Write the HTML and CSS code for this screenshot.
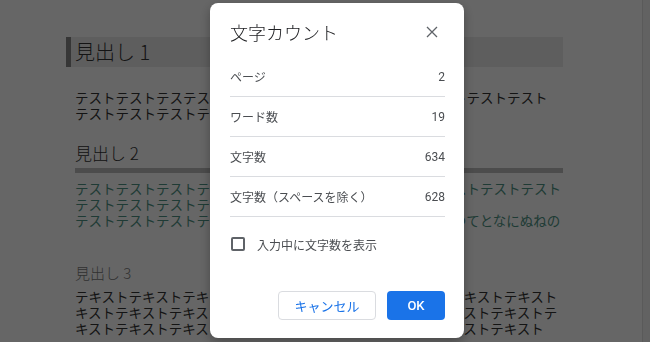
FILE: index.html
```html
<html lang="ja"><head>
  <meta charset="UTF-8">
  <meta name="viewport" content="width=device-width, initial-scale=1.0">
  <title>文字カウント</title>
  <link rel="stylesheet" href="styles.css">
</head>
<body>
  <div class="doc">
    <div class="page">
      <h1 class="heading1">見出し 1</h1>
      <p class="para">テストテストテステストテストテストテストテストテストテストテストテスト<br>テストテストテストテスおわりテストテスト</p>
      <h2 class="heading2">見出し 2</h2>
      <p class="para green">テストテストテストテストテストテストテストテストテストテストテストテスト<br>テストテストテストテストテストテスト<br>テストテストテストテスあいうえおかきくけこさしすせそたちつてとなにぬねの</p>
      <h3 class="heading3">見出し 3</h3>
      <p class="para">テキストテキストテキストテキストテキストテキストテキストテキストテキスト<br>キストテキストテキストテキストテキストテキストテキストテキストテキストテ<br>キストテキストテキストテキストテキストテキストテキストテキストテキスト</p>
    </div>
    <div class="scrollbar"></div>
  </div>

  <div class="scrim"></div>

  <div class="dialog">
    <div class="dialog-header">
      <div class="dialog-title">文字カウント</div>
      <div class="close">
        <svg width="24" height="24" viewBox="0 0 24 24"><path d="M7 7 L17 17 M17 7 L7 17" stroke="#5f6368" stroke-width="1.3" fill="none"/></svg>
      </div>
    </div>

    <div class="count-row"><span>ページ</span><span class="count">2</span></div>
    <div class="count-row"><span>ワード数</span><span class="count">19</span></div>
    <div class="count-row"><span>文字数</span><span class="count">634</span></div>
    <div class="count-row"><span>文字数（スペースを除く）</span><span class="count">628</span></div>

    <label class="check-row"><span class="checkbox"></span>入力中に文字数を表示</label>

    <div class="buttons">
      <button class="btn btn-cancel">キャンセル</button>
      <button class="btn btn-ok">OK</button>
    </div>
  </div>
</body></html>
```

FILE: styles.css
```css
body {
  margin: 0;
  width: 650px;
  height: 342px;
  overflow: hidden;
  background-color: #ffffff;
  font-family: "Noto Sans CJK JP", sans-serif;
}

/* 背景のドキュメント */
.doc {
  display: flex;
  height: 342px;
}
.page {
  flex: 1;
  padding-left: 75px;
}
.scrollbar {
  width: 7px;
  background-color: #f4f4f4;
  border-left: 1px solid #e2e2e2;
}
.heading1 {
  margin: 37px 0 0 -9px;
  width: 488px;
  height: 30px;
  line-height: 30px;
  padding-left: 4px;
  border-left: 5px solid #888888;
  background-color: #ebebeb;
  font-size: 20px;
  font-weight: 300;
  color: #333;
}
.para {
  margin: 22px 0 0 0;
  width: 488px;
  font-size: 13.5px;
  line-height: 16px;
  white-space: nowrap;
  color: #333;
}
.heading2 {
  margin: 20px 0 0 0;
  width: 488px;
  font-size: 17px;
  font-weight: 300;
  line-height: 24px;
  padding-bottom: 3px;
  border-bottom: 5px solid #bdbdbd;
  color: #333;
}
.para.green {
  margin-top: 7px;
  color: #4e9484;
}
.heading3 {
  margin: 35px 0 0 0;
  font-size: 15px;
  line-height: 20px;
  font-weight: 300;
  color: #7a7a7a;
}
.heading3 + .para {
  margin-top: 5px;
}

/* モーダル */
.scrim {
  position: fixed;
  top: 0;
  left: 0;
  right: 0;
  bottom: 0;
  background-color: rgba(0, 0, 0, 0.6);
}
.dialog {
  position: fixed;
  left: 210px;
  top: 3px;
  width: 215px;
  height: 317px;
  padding: 0 19px 18px 20px;
  background-color: #ffffff;
  border-radius: 8px;
  box-shadow: 0 4px 12px rgba(0, 0, 0, 0.3);
  display: flex;
  flex-direction: column;
  font-family: Roboto, "Noto Sans CJK JP", sans-serif;
  color: #4a4d51;
}
.dialog-header {
  display: flex;
  align-items: center;
  height: 50px;
  padding-top: 4px;
}
.dialog-title {
  flex: 1;
  font-size: 18px;
  font-weight: 300;
  color: #202124;
}
.close {
  width: 24px;
  height: 24px;
  margin-right: 1px;
}
.count-row {
  display: flex;
  justify-content: space-between;
  align-items: center;
  height: 40px;
  box-sizing: border-box;
  border-bottom: 1px solid #dadce0;
  font-size: 12px;
}
.check-row {
  display: flex;
  align-items: center;
  margin-top: 20px;
  height: 14px;
  font-size: 12px;
}
.checkbox {
  width: 10px;
  height: 10px;
  border: 2px solid #5f6368;
  border-radius: 2px;
  margin: 0 12px 0 1px;
}
.buttons {
  margin-top: auto;
  display: flex;
  justify-content: flex-end;
  gap: 11px;
}
.btn {
  height: 29px;
  border-radius: 4px;
  font-family: Roboto, "Noto Sans CJK JP", sans-serif;
  font-size: 13px;
  padding: 0;
}
.btn-cancel {
  width: 98px;
  background-color: #ffffff;
  border: 1px solid #dadce0;
  color: #1a73e8;
}
.btn-ok {
  width: 58px;
  background-color: #1a73e8;
  border: none;
  color: #ffffff;
  font-weight: 500;
}
```
